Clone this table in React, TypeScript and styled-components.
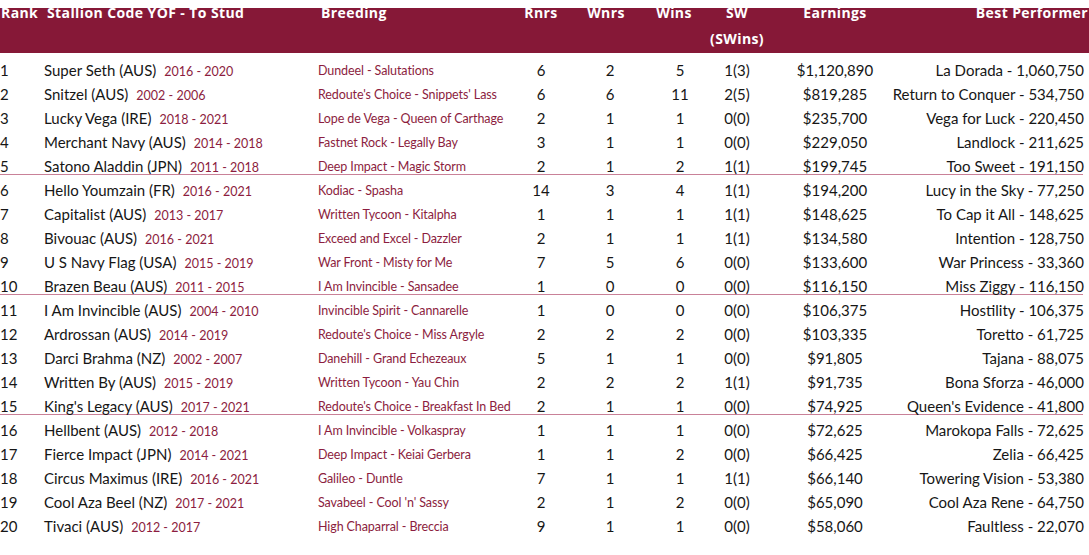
import styled, { createGlobalStyle } from "styled-components";

const GlobalStyle = createGlobalStyle`
  html, body {
    margin: 0;
    padding: 0;
    background: #ffffff;
  }
  body {
    font-family: Lato, "Noto Sans", "Liberation Sans", sans-serif;
    color: #161616;
  }
`;

type Stallion = {
  rank: number;
  name: string;
  years: string;
  breeding: string;
  rnrs: number;
  wnrs: number;
  wins: number;
  sw: string;
  earnings: string;
  best: string;
};

const stallions: Stallion[] = [
  { rank: 1, name: "Super Seth (AUS)", years: "2016 - 2020", breeding: "Dundeel - Salutations", rnrs: 6, wnrs: 2, wins: 5, sw: "1(3)", earnings: "$1,120,890", best: "La Dorada - 1,060,750" },
  { rank: 2, name: "Snitzel (AUS)", years: "2002 - 2006", breeding: "Redoute's Choice - Snippets' Lass", rnrs: 6, wnrs: 6, wins: 11, sw: "2(5)", earnings: "$819,285", best: "Return to Conquer - 534,750" },
  { rank: 3, name: "Lucky Vega (IRE)", years: "2018 - 2021", breeding: "Lope de Vega - Queen of Carthage", rnrs: 2, wnrs: 1, wins: 1, sw: "0(0)", earnings: "$235,700", best: "Vega for Luck - 220,450" },
  { rank: 4, name: "Merchant Navy (AUS)", years: "2014 - 2018", breeding: "Fastnet Rock - Legally Bay", rnrs: 3, wnrs: 1, wins: 1, sw: "0(0)", earnings: "$229,050", best: "Landlock - 211,625" },
  { rank: 5, name: "Satono Aladdin (JPN)", years: "2011 - 2018", breeding: "Deep Impact - Magic Storm", rnrs: 2, wnrs: 1, wins: 2, sw: "1(1)", earnings: "$199,745", best: "Too Sweet - 191,150" },
  { rank: 6, name: "Hello Youmzain (FR)", years: "2016 - 2021", breeding: "Kodiac - Spasha", rnrs: 14, wnrs: 3, wins: 4, sw: "1(1)", earnings: "$194,200", best: "Lucy in the Sky - 77,250" },
  { rank: 7, name: "Capitalist (AUS)", years: "2013 - 2017", breeding: "Written Tycoon - Kitalpha", rnrs: 1, wnrs: 1, wins: 1, sw: "1(1)", earnings: "$148,625", best: "To Cap it All - 148,625" },
  { rank: 8, name: "Bivouac (AUS)", years: "2016 - 2021", breeding: "Exceed and Excel - Dazzler", rnrs: 2, wnrs: 1, wins: 1, sw: "1(1)", earnings: "$134,580", best: "Intention - 128,750" },
  { rank: 9, name: "U S Navy Flag (USA)", years: "2015 - 2019", breeding: "War Front - Misty for Me", rnrs: 7, wnrs: 5, wins: 6, sw: "0(0)", earnings: "$133,600", best: "War Princess - 33,360" },
  { rank: 10, name: "Brazen Beau (AUS)", years: "2011 - 2015", breeding: "I Am Invincible - Sansadee", rnrs: 1, wnrs: 0, wins: 0, sw: "0(0)", earnings: "$116,150", best: "Miss Ziggy - 116,150" },
  { rank: 11, name: "I Am Invincible (AUS)", years: "2004 - 2010", breeding: "Invincible Spirit - Cannarelle", rnrs: 1, wnrs: 0, wins: 0, sw: "0(0)", earnings: "$106,375", best: "Hostility - 106,375" },
  { rank: 12, name: "Ardrossan (AUS)", years: "2014 - 2019", breeding: "Redoute's Choice - Miss Argyle", rnrs: 2, wnrs: 2, wins: 2, sw: "0(0)", earnings: "$103,335", best: "Toretto - 61,725" },
  { rank: 13, name: "Darci Brahma (NZ)", years: "2002 - 2007", breeding: "Danehill - Grand Echezeaux", rnrs: 5, wnrs: 1, wins: 1, sw: "0(0)", earnings: "$91,805", best: "Tajana - 88,075" },
  { rank: 14, name: "Written By (AUS)", years: "2015 - 2019", breeding: "Written Tycoon - Yau Chin", rnrs: 2, wnrs: 2, wins: 2, sw: "1(1)", earnings: "$91,735", best: "Bona Sforza - 46,000" },
  { rank: 15, name: "King's Legacy (AUS)", years: "2017 - 2021", breeding: "Redoute's Choice - Breakfast In Bed", rnrs: 2, wnrs: 1, wins: 1, sw: "0(0)", earnings: "$74,925", best: "Queen's Evidence - 41,800" },
  { rank: 16, name: "Hellbent (AUS)", years: "2012 - 2018", breeding: "I Am Invincible - Volkaspray", rnrs: 1, wnrs: 1, wins: 1, sw: "0(0)", earnings: "$72,625", best: "Marokopa Falls - 72,625" },
  { rank: 17, name: "Fierce Impact (JPN)", years: "2014 - 2021", breeding: "Deep Impact - Keiai Gerbera", rnrs: 1, wnrs: 1, wins: 2, sw: "0(0)", earnings: "$66,425", best: "Zelia - 66,425" },
  { rank: 18, name: "Circus Maximus (IRE)", years: "2016 - 2021", breeding: "Galileo - Duntle", rnrs: 7, wnrs: 1, wins: 1, sw: "1(1)", earnings: "$66,140", best: "Towering Vision - 53,380" },
  { rank: 19, name: "Cool Aza Beel (NZ)", years: "2017 - 2021", breeding: "Savabeel - Cool 'n' Sassy", rnrs: 2, wnrs: 1, wins: 2, sw: "0(0)", earnings: "$65,090", best: "Cool Aza Rene - 64,750" },
  { rank: 20, name: "Tivaci (AUS)", years: "2012 - 2017", breeding: "High Chaparral - Breccia", rnrs: 9, wnrs: 1, wins: 1, sw: "0(0)", earnings: "$58,060", best: "Faultless - 22,070" },
];

const columns = "44px 274px 190px 66px 72px 68px 46px 150px minmax(0, 1fr)";

const Table = styled.div`
  width: 1089px;
  display: flex;
  flex-direction: column;
`;

const HeaderRow = styled.div`
  display: grid;
  grid-template-columns: ${columns};
  height: 53px;
  background: linear-gradient(to bottom, transparent 8px, #861837 8px);
  color: #ffffff;
  font-family: "Open Sans", Lato, "Liberation Sans", sans-serif;
  font-weight: 700;
  font-size: 14px;
  letter-spacing: 0.4px;
  line-height: 26px;
  margin-bottom: 5px;
`;

const HeadCell = styled.div<{ $align?: "left" | "center" | "right"; $nudge?: number }>`
  display: flex;
  flex-direction: column;
  align-items: ${({ $align }) =>
    $align === "center" ? "center" : $align === "right" ? "flex-end" : "flex-start"};
  padding-left: ${({ $align }) => ($align === "left" || !$align ? "3px" : "0")};
  padding-right: ${({ $nudge, $align }) =>
    $align === "right" ? "1px" : `${$nudge ?? 0}px`};
  white-space: nowrap;
`;

const Row = styled.div<{ $groupEnd?: boolean }>`
  display: grid;
  grid-template-columns: ${columns};
  height: 24px;
  align-items: center;
  font-size: 15px;
  background: ${({ $groupEnd }) =>
    $groupEnd
      ? "linear-gradient(#c98198, #c98198) left bottom 3px / 1083px 1px no-repeat"
      : "none"};
`;

const Cell = styled.div<{ $align?: "left" | "center" | "right" }>`
  display: flex;
  align-items: baseline;
  justify-content: ${({ $align }) =>
    $align === "center" ? "center" : $align === "right" ? "flex-end" : "flex-start"};
  padding-right: ${({ $align }) => ($align === "right" ? "5px" : "0")};
  white-space: nowrap;
`;

const Years = styled.span`
  margin-left: 8px;
  font-size: 12.5px;
  color: #8c1d40;
`;

const Breeding = styled.span`
  font-size: 12.5px;
  letter-spacing: -0.1px;
  color: #8c1d40;
`;

export default function App() {
  return (
    <>
      <GlobalStyle />
      <Table>
        <HeaderRow>
          <HeadCell style={{ paddingLeft: 1 }}>Rank</HeadCell>
          <HeadCell>Stallion Code YOF - To Stud</HeadCell>
          <HeadCell>Breeding</HeadCell>
          <HeadCell $align="center">Rnrs</HeadCell>
          <HeadCell $align="center" $nudge={8}>Wnrs</HeadCell>
          <HeadCell $align="center" $nudge={12}>Wins</HeadCell>
          <HeadCell $align="center">
            <span>SW</span>
            <span>(SWins)</span>
          </HeadCell>
          <HeadCell $align="center">Earnings</HeadCell>
          <HeadCell $align="right">Best Performer</HeadCell>
        </HeaderRow>
        {stallions.map((s) => (
          <Row key={s.rank} $groupEnd={s.rank % 5 === 0 && s.rank < 20}>
            <Cell>{s.rank}</Cell>
            <Cell>
              {s.name}
              <Years>{s.years}</Years>
            </Cell>
            <Cell>
              <Breeding>{s.breeding}</Breeding>
            </Cell>
            <Cell $align="center">{s.rnrs}</Cell>
            <Cell $align="center">{s.wnrs}</Cell>
            <Cell $align="center">{s.wins}</Cell>
            <Cell $align="center">{s.sw}</Cell>
            <Cell $align="center">{s.earnings}</Cell>
            <Cell $align="right">{s.best}</Cell>
          </Row>
        ))}
      </Table>
    </>
  );
}
